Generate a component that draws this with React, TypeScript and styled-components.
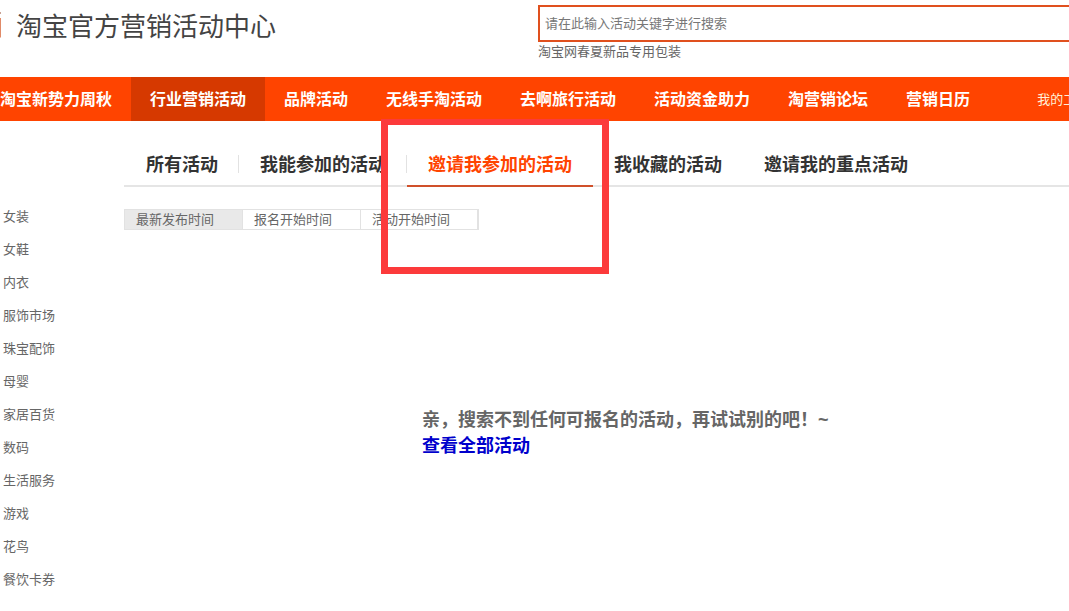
import React from 'react';
import styled, { createGlobalStyle } from 'styled-components';

const GlobalStyle = createGlobalStyle`
  * { box-sizing: border-box; }
  body {
    margin: 0;
    background: #fff;
    color: #666;
    font-family: "Liberation Sans", "Noto Sans CJK SC", sans-serif;
    font-size: 13px;
    line-height: 20px;
    overflow-x: hidden;
  }
  ul { margin: 0; padding: 0; list-style: none; }
  a { color: inherit; text-decoration: none; }
`;

const Page = styled.div`
  width: 100%;
`;

const Header = styled.header`
  display: grid;
  grid-template-columns: 538px 1fr;
  height: 77px;
`;

const Brand = styled.div`
  display: flex;
  align-items: flex-start;
  gap: 14px;
  padding-top: 7px;
`;

const Logo = styled.svg`
  width: 2px;
  height: 40px;
`;

const Title = styled.h1`
  margin: 0;
  font-size: 26px;
  font-weight: 400;
  line-height: 40px;
  color: #444;
`;

const Search = styled.form`
  display: flex;
  flex-direction: column;
  padding-top: 5px;
`;

const SearchInput = styled.input`
  width: 100%;
  height: 37px;
  padding: 0 5px;
  border: 2px solid #e0501e;
  border-right: 0;
  border-radius: 0;
  outline: none;
  background: #fff;
  font: inherit;
  color: #666;
  &::placeholder { color: #777; opacity: 1; }
`;

const HotLink = styled.a`
  align-self: flex-start;
`;

const Nav = styled.nav`
  display: flex;
  height: 44px;
  overflow: hidden;
  background: #ff4400;
  color: #fff;
  line-height: 46px;
  white-space: nowrap;
`;

const NavItem = styled.a<{ $active?: boolean; $first?: boolean }>`
  flex: none;
  padding: 0 19px;
  padding-left: ${p => (p.$first ? '0' : '19px')};
  font-size: 16px;
  font-weight: 700;
  background: ${p => (p.$active ? '#d63900' : 'transparent')};
`;

const NavMine = styled.a`
  flex: none;
  margin-left: 48px;
  color: #fff0d8;
`;

const Body = styled.div`
  display: grid;
  grid-template-columns: 124px 1fr;
`;

const Sidebar = styled.ul`
  padding: 79px 0 0 3px;
`;

const Category = styled.li`
  line-height: 33px;
`;

const Main = styled.main`
  position: relative;
  min-width: 0;
`;

const Tabs = styled.ul`
  display: flex;
  align-items: flex-end;
  height: 66px;
  padding-left: 1px;
  border-bottom: 2px solid #e5e5e5;
  white-space: nowrap;
`;

const Tab = styled.li<{ $active?: boolean; $divided?: boolean }>`
  flex: none;
  height: 44px;
  margin-bottom: -2px;
  padding: 0 21px;
  border-bottom: 2px solid ${p => (p.$active ? '#d0502a' : 'transparent')};
  background: ${p =>
    p.$divided ? 'linear-gradient(#e2e2e2, #e2e2e2) right 12px / 1px 18px no-repeat' : 'none'};
  color: ${p => (p.$active ? '#ff4400' : '#333')};
  font-size: 18px;
  font-weight: 700;
  line-height: 44px;
`;

const SortBar = styled.div`
  display: inline-flex;
  margin-top: 22px;
  border: 1px solid #e2e2e2;
  border-right-width: 2px;
`;

const SortButton = styled.button<{ $active?: boolean }>`
  width: 118px;
  height: 19px;
  padding: 0 11px;
  border: 0;
  border-right: 1px solid #e2e2e2;
  background: ${p => (p.$active ? '#e9e9e9' : '#fff')};
  color: #666;
  font: inherit;
  line-height: 19px;
  text-align: left;
  &:last-child { width: 116px; border-right: 0; }
`;

const Empty = styled.section`
  padding: 177px 0 0 298px;
  font-size: 18px;
  font-weight: 700;
  line-height: 26px;
`;

const EmptyText = styled.p`
  margin: 0;
`;

const EmptyLink = styled.a`
  color: #0000cc;
`;

const Highlight = styled.div`
  position: absolute;
  top: -2px;
  left: 257px;
  width: 228px;
  height: 155px;
  border: 7px solid #fc3a3b;
  border-top-width: 6px;
  pointer-events: none;
`;

const navItems = [
  '淘宝新势力周秋', '行业营销活动', '品牌活动', '无线手淘活动',
  '去啊旅行活动', '活动资金助力', '淘营销论坛', '营销日历',
];

const categories = [
  '女装', '女鞋', '内衣', '服饰市场', '珠宝配饰', '母婴',
  '家居百货', '数码', '生活服务', '游戏', '花鸟', '餐饮卡券',
];

const tabs = [
  { label: '所有活动', divided: true },
  { label: '我能参加的活动', divided: true },
  { label: '邀请我参加的活动', active: true },
  { label: '我收藏的活动' },
  { label: '邀请我的重点活动' },
];

const sorts = ['最新发布时间', '报名开始时间', '活动开始时间'];

export default function App() {
  return (
    <Page>
      <GlobalStyle />
      <Header>
        <Brand>
          <Logo viewBox="0 0 2 40" aria-hidden="true">
            <path d="M0 5h1v2H0z" fill="#c9a294" />
            <path d="M0 11h1v19l-1 1z" fill="#e08a68" />
          </Logo>
          <Title>淘宝官方营销活动中心</Title>
        </Brand>
        <Search>
          <SearchInput aria-label="搜索活动" placeholder="请在此输入活动关键字进行搜索" />
          <HotLink href="#">淘宝网春夏新品专用包装</HotLink>
        </Search>
      </Header>
      <Nav>
        {navItems.map((label, i) => (
          <NavItem key={label} href="#" $first={i === 0} $active={i === 1}>
            {label}
          </NavItem>
        ))}
        <NavMine href="#">我的工作台</NavMine>
      </Nav>
      <Body>
        <Sidebar>
          {categories.map(c => (
            <Category key={c}><a href="#">{c}</a></Category>
          ))}
        </Sidebar>
        <Main>
          <Tabs>
            {tabs.map(t => (
              <Tab key={t.label} $active={t.active} $divided={t.divided}>
                <a href="#">{t.label}</a>
              </Tab>
            ))}
          </Tabs>
          <SortBar>
            {sorts.map((s, i) => (
              <SortButton key={s} type="button" $active={i === 0}>{s}</SortButton>
            ))}
          </SortBar>
          <Empty>
            <EmptyText>亲，搜索不到任何可报名的活动，再试试别的吧！~</EmptyText>
            <EmptyLink href="#">查看全部活动</EmptyLink>
          </Empty>
          <Highlight />
        </Main>
      </Body>
    </Page>
  );
}
